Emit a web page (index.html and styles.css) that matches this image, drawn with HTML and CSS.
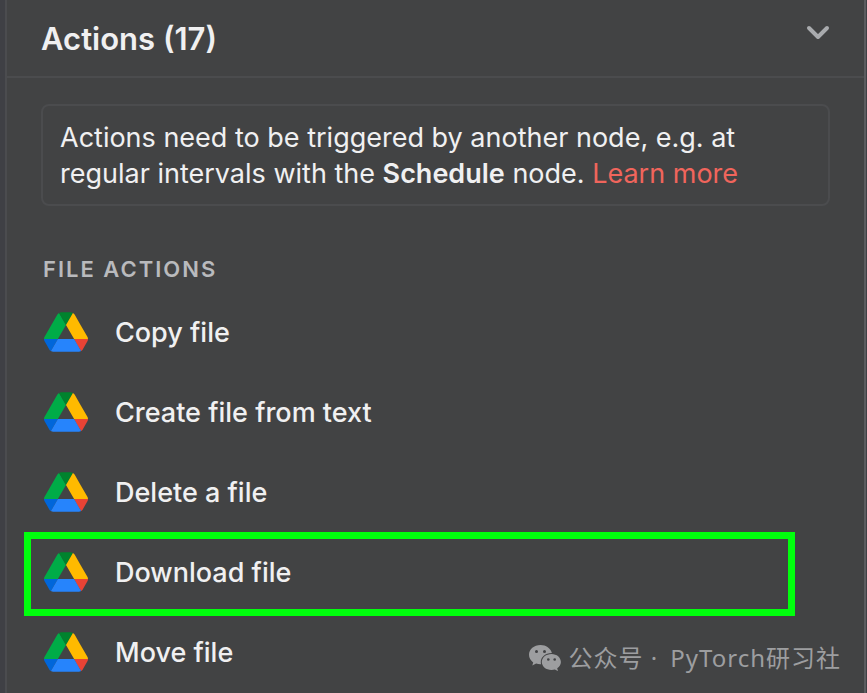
FILE: index.html
```html
<!DOCTYPE html>
<html lang="en">
<head>
<meta charset="utf-8">
<title>Actions</title>
<link rel="stylesheet" href="styles.css">
</head>
<body>
<svg class="symbols" aria-hidden="true">
  <symbol id="drive" viewBox="0 0 87.3 78">
    <path d="m6.6 66.85 3.85 6.65c.8 1.4 1.95 2.5 3.3 3.3l13.75-23.8h-27.5c0 1.55.4 3.1 1.2 4.5z" fill="#0066da"/>
    <path d="m43.65 25-13.75-23.8c-1.35.8-2.5 1.9-3.3 3.3l-25.4 44a9.06 9.06 0 0 0-1.2 4.5h27.5z" fill="#00ac47"/>
    <path d="m73.55 76.8c1.35-.8 2.5-1.9 3.3-3.3l1.6-2.75 7.65-13.25c.8-1.4 1.2-2.95 1.2-4.5h-27.502l5.852 11.5z" fill="#ea4335"/>
    <path d="m43.65 25 13.75-23.8c-1.35-.8-2.9-1.2-4.5-1.2h-18.5c-1.6 0-3.15.45-4.5 1.2z" fill="#00832d"/>
    <path d="m59.8 53h-32.3l-13.75 23.8c1.35.8 2.9 1.2 4.5 1.2h50.8c1.6 0 3.15-.45 4.5-1.2z" fill="#2684fc"/>
    <path d="m73.4 26.5-12.7-22c-.8-1.4-1.95-2.5-3.3-3.3l-13.75 23.8 16.15 28h27.45c0-1.55-.4-3.1-1.2-4.5z" fill="#ffba00"/>
  </symbol>
</svg>
<main class="panel">
  <header class="header">
    <h1 class="title">Actions (17)</h1>
    <button class="toggle" type="button" aria-label="Collapse actions">
      <svg viewBox="0 0 24 16" width="24" height="16"><path d="M3 3l9 9 9-9" fill="none" stroke="currentColor" stroke-width="4" stroke-linecap="round" stroke-linejoin="round"/></svg>
    </button>
  </header>
  <p class="notice">Actions need to be triggered by another node, e.g. at regular intervals with the <strong>Schedule</strong> node. <a class="link" href="#">Learn more</a></p>
  <h2 class="section">File actions</h2>
  <ul class="list">
    <li><button class="action" type="button"><svg class="icon"><use href="#drive"/></svg>Copy file</button></li>
    <li><button class="action" type="button"><svg class="icon"><use href="#drive"/></svg>Create file from text</button></li>
    <li><button class="action" type="button"><svg class="icon"><use href="#drive"/></svg>Delete a file</button></li>
    <li class="marked"><button class="action" type="button"><svg class="icon"><use href="#drive"/></svg>Download file</button></li>
    <li><button class="action" type="button"><svg class="icon"><use href="#drive"/></svg>Move file</button></li>
  </ul>
</main>
<div class="watermark" lang="zh">
  <svg viewBox="0 0 32 26" width="32" height="26">
    <path fill="currentColor" d="M11.500 0C5 0 0 4.300 0 9.800c0 3.100 1.600 5.800 4.200 7.600L3.300 20.600l3.800-2c1.500.5 3.300.8 5 .7A9 9 0 0 1 11.800 17c0-5 4.700-9 10.700-9h.4C21.700 3.300 17 0 11.500 0z"/>
    <path fill="currentColor" d="M22.500 9C17 9 12.800 12.600 12.800 17s4.200 8 9.700 8c1.200 0 2.400-.2 3.400-.5l3.100 1.600-.8-2.800c2.300-1.500 3.700-3.700 3.700-6.300 0-4.400-4.100-8-9.400-8z"/>
    <g fill="#414244"><circle cx="7.500" cy="6.500" r="1.500"/><circle cx="15.500" cy="6.500" r="1.500"/><circle cx="19.300" cy="14.500" r="1.300"/><circle cx="25.700" cy="14.500" r="1.300"/></g>
  </svg>
  <span class="kind">公众号 ·</span>
  <span>PyTorch研习社</span>
</div>
</body>
</html>
```
FILE: styles.css
```css
* {
  box-sizing: border-box;
}

body {
  margin: 0;
  height: 100vh;
  overflow: hidden;
  padding: 0 1px 0 5px;
  background: #3f4045;
  color: #f0f0f1;
  font-family: Inter, "Noto Sans CJK SC", sans-serif;
  font-size: 27px;
}

.symbols {
  display: none;
}

.panel {
  min-height: 100vh;
  background: #424344;
  border-left: 2px solid #4b4c4f;
  border-right: 2px solid #5b5c5f;
}

.header {
  display: flex;
  align-items: center;
  justify-content: space-between;
  height: 78px;
  padding: 0 34px;
  border-bottom: 2px solid #4b4c4e;
}

.title {
  margin: 0;
  font-size: 31px;
  font-weight: 600;
}

.toggle {
  display: flex;
  margin: 0 0 10px;
  padding: 0;
  border: 0;
  background: none;
  color: #a9abae;
}

.notice {
  margin: 26px 34px 0;
  padding: 14px 60px 12px 17px;
  border: 2px solid #4b4c4e;
  border-radius: 8px;
  line-height: 36px;
}

.notice strong {
  font-weight: 600;
}

.link {
  color: #f0655c;
  text-decoration: none;
}

.section {
  margin: 48px 36px 8px;
  color: #b9babd;
  font-size: 22px;
  font-weight: 600;
  line-height: 30px;
  letter-spacing: 2px;
  text-transform: uppercase;
}

.list {
  margin: 0 69px 0 17px;
  padding: 0;
  list-style: none;
}

.action {
  display: flex;
  align-items: center;
  gap: 27px;
  width: 100%;
  height: 80px;
  padding: 0 20px;
  border: 0;
  background: none;
  color: inherit;
  font: inherit;
  font-weight: 500;
  text-align: left;
}

.icon {
  width: 44px;
  height: 40px;
}

.marked {
  position: relative;
}

.marked::after {
  content: "";
  position: absolute;
  inset: 0 0 -4px;
  border: 7px solid #00ff0d;
  pointer-events: none;
}

.watermark {
  position: absolute;
  right: 26px;
  bottom: 17px;
  display: flex;
  align-items: center;
  gap: 8px;
  color: #9d9ea0;
  font-family: "Noto Sans", "Noto Sans CJK SC", sans-serif;
  font-size: 24px;
  line-height: 36px;
  letter-spacing: 1px;
}

.kind {
  margin-right: 4px;
}
```
